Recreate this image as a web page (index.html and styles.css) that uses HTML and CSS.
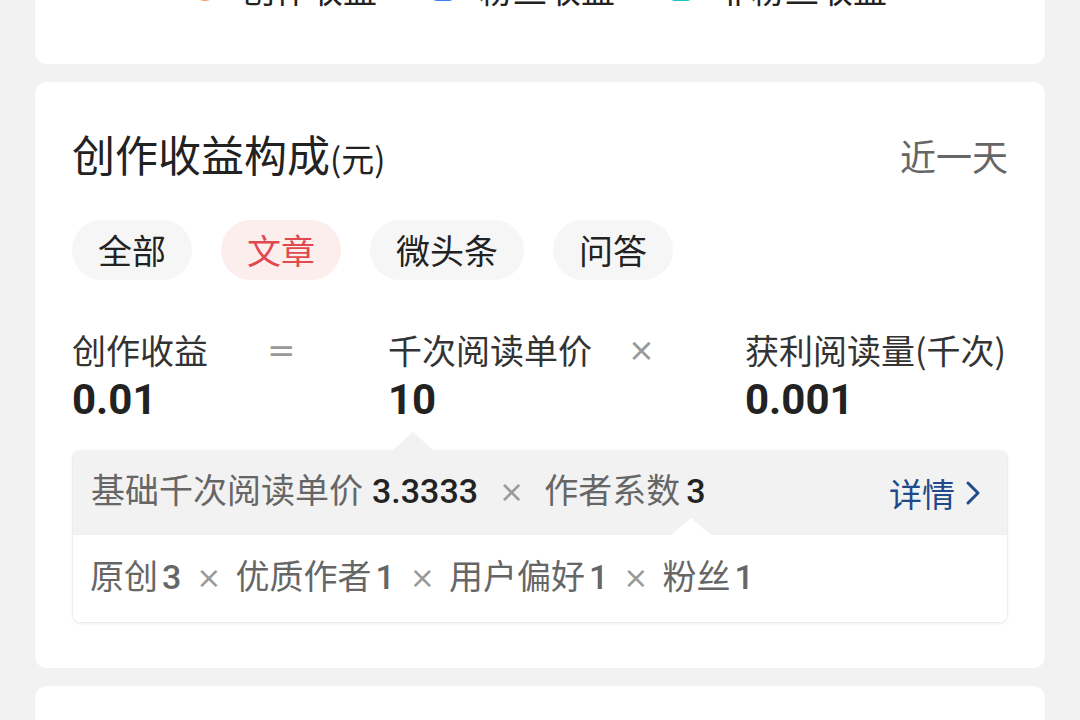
FILE: index.html
```html
<!DOCTYPE html>
<html lang="zh-CN">
<head>
<meta charset="utf-8">
<title>创作收益构成</title>
<link rel="stylesheet" href="styles.css">
</head>
<body>
<div class="page">
  <div class="card card-top">
    <div class="legend">
      <div class="legend-item"><span class="mark mark-orange"></span><span>创作收益</span></div>
      <div class="legend-item"><span class="mark mark-blue"></span><span>粉丝收益</span></div>
      <div class="legend-item"><span class="mark mark-teal"></span><span>非粉丝收益</span></div>
    </div>
  </div>

  <div class="card card-main">
    <div class="head">
      <div class="title">创作收益构成<span class="unit">(元)</span></div>
      <div class="range">近一天</div>
    </div>

    <div class="tabs">
      <span class="pill">全部</span>
      <span class="pill pill-active">文章</span>
      <span class="pill">微头条</span>
      <span class="pill">问答</span>
    </div>

    <div class="formula">
      <div class="f-label">创作收益</div>
      <div class="f-op f-eq">=</div>
      <div class="f-label">千次阅读单价</div>
      <div class="f-op">×</div>
      <div class="f-label">获利阅读量(千次)</div>
      <div class="f-val">0.01</div>
      <div></div>
      <div class="f-val">10</div>
      <div></div>
      <div class="f-val">0.001</div>
    </div>

    <div class="detail">
      <div class="detail-top">
        <div class="detail-text">基础千次阅读单价<b>3.3333</b><span class="x x-wide">×</span>作者系数<b class="tight">3</b></div>
        <div class="more">详情<svg class="chev" width="16" height="26" viewBox="0 0 16 26"><path d="M3 3 L13 13 L3 23" fill="none" stroke="#1f4b8a" stroke-width="3" stroke-linecap="round" stroke-linejoin="round"/></svg></div>
      </div>
      <div class="detail-bottom">
        <div class="detail-text">原创<i>3</i><span class="x">×</span>优质作者<i>1</i><span class="x">×</span>用户偏好<i>1</i><span class="x">×</span>粉丝<i>1</i></div>
      </div>
    </div>
  </div>

  <div class="card card-next"></div>
</div>
</body>
</html>
```

FILE: styles.css
```css
html, body {
  margin: 0;
  padding: 0;
}
body {
  background: #f2f2f2;
  font-family: "Noto Sans CJK SC", "Noto Sans", sans-serif;
  color: #222;
  width: 1080px;
  height: 720px;
  overflow: hidden;
}
.page {
  padding: 0 35px;
}
.card {
  background: #fff;
  border-radius: 12px;
}
.card-top {
  margin-top: -43px;
  height: 107px;
  box-sizing: border-box;
  padding-top: 12px;
}
.legend {
  display: flex;
  justify-content: center;
  gap: 54px;
  height: 40px;
  line-height: 40px;
  font-size: 34px;
  color: #222;
}
.legend-item {
  display: flex;
  align-items: center;
}
.mark {
  width: 24px;
  height: 24px;
  border-radius: 6px;
  margin-right: 24px;
}
.mark-orange { background: #f79a5c; border-radius: 50%; }
.mark-blue { background: #3f80f6; }
.mark-teal { background: #19c5c4; }

.card-main {
  margin-top: 18px;
  padding: 48px 37px 45px 37px;
}
.head {
  display: flex;
  justify-content: space-between;
  align-items: center;
  height: 50px;
}
.title {
  font-size: 43px;
  color: #222;
  line-height: 50px;
}
.unit {
  font-size: 33px;
}
.range {
  font-size: 36px;
  color: #666;
}
.tabs {
  display: flex;
  gap: 29px;
  margin-top: 40px;
}
.pill {
  height: 60px;
  line-height: 60px;
  padding: 0 26px;
  border-radius: 30px;
  background: #f6f6f6;
  font-size: 34px;
  color: #222;
}
.pill-active {
  background: #fdeeee;
  color: #e04a4f;
}
.formula {
  display: grid;
  grid-template-columns: 178px 138px 222px 135px 1fr;
  margin-top: 48px;
}
.f-label {
  font-size: 34px;
  line-height: 44px;
  color: #333;
  white-space: nowrap;
}
.f-op {
  font-family: "DejaVu Sans", sans-serif;
  font-size: 32px;
  line-height: 44px;
  color: #999;
  padding-left: 18px;
}
.f-eq {
  font-size: 34px;
  padding-left: 17px;
}
.f-val {
  font-family: Roboto, "Noto Sans", sans-serif;
  font-size: 42px;
  font-weight: 700;
  line-height: 56px;
  color: #222;
}
.detail {
  position: relative;
  margin-top: 22px;
  border-radius: 8px;
  box-shadow: 0 1px 3px rgba(0, 0, 0, 0.06);
  border: 1px solid #ededed;
  border-top: none;
}
.detail::before {
  content: "";
  position: absolute;
  left: 320px;
  top: -18px;
  border-left: 20px solid transparent;
  border-right: 20px solid transparent;
  border-bottom: 18px solid #f2f2f2;
}
.detail-top {
  position: relative;
  background: #f2f2f2;
  border-radius: 8px 8px 0 0;
  height: 85px;
  display: flex;
  align-items: center;
  justify-content: space-between;
  padding: 0 26px 0 18px;
}
.detail-top::after {
  content: "";
  position: absolute;
  left: 598px;
  bottom: 0;
  border-left: 20px solid transparent;
  border-right: 20px solid transparent;
  border-bottom: 17px solid #fff;
}
.detail-bottom {
  background: #fff;
  border-radius: 0 0 8px 8px;
  height: 87px;
  display: flex;
  align-items: center;
  padding: 0 17px;
}
.detail-text {
  font-size: 34px;
  color: #666;
  white-space: nowrap;
  line-height: 44px;
  transform: translateY(-2px);
}
.detail-text b {
  font-family: Roboto, "Noto Sans", sans-serif;
  font-weight: 500;
  color: #222;
  margin-left: 9px;
}
.detail-text b.tight {
  margin-left: 6px;
}
.detail-text i {
  font-family: Roboto, "Noto Sans", sans-serif;
  font-style: normal;
  font-weight: 500;
  color: #666;
  margin-left: 4px;
}
.x {
  font-family: "DejaVu Sans", sans-serif;
  font-size: 30px;
  color: #999;
  margin: 0 14px 0 15px;
  vertical-align: 1px;
}
.x-wide {
  margin: 0 20px 0 21px;
}
.more {
  display: flex;
  align-items: center;
  font-size: 33px;
  color: #1f4b8a;
}
.chev {
  margin-left: 10px;
}
.card-next {
  margin-top: 18px;
  height: 60px;
}
```
